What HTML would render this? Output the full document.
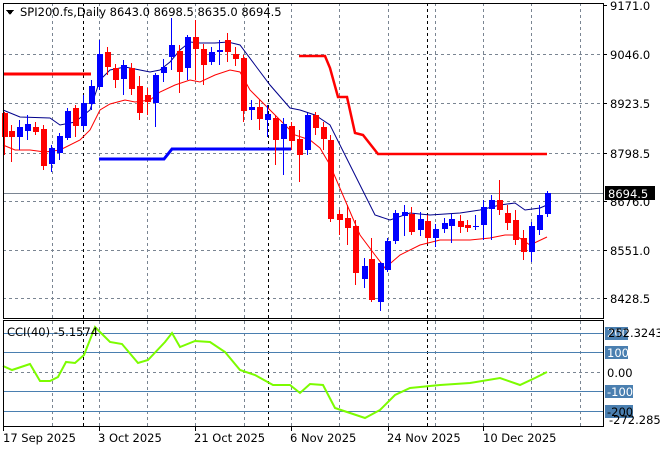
<!DOCTYPE html>
<html><head><meta charset="utf-8"><style>
body{margin:0;background:#fff;width:660px;height:450px;overflow:hidden;font-family:"DejaVu Sans","Liberation Sans",sans-serif}
svg{position:absolute;left:0;top:0}
text{font-family:"DejaVu Sans","Liberation Sans",sans-serif;font-size:11.5px;fill:#000}
</style></head><body>
<svg width="660" height="450" viewBox="0 0 660 450" shape-rendering="crispEdges">
<g stroke="#7a8592" stroke-dasharray="3,3" stroke-width="1">
<line x1="3" y1="54.5" x2="603" y2="54.5"/><line x1="3" y1="103.5" x2="603" y2="103.5"/><line x1="3" y1="153.5" x2="603" y2="153.5"/><line x1="3" y1="201.5" x2="603" y2="201.5"/><line x1="3" y1="250.5" x2="603" y2="250.5"/><line x1="3" y1="298.5" x2="603" y2="298.5"/>
<line x1="3" y1="372.5" x2="603" y2="372.5"/>
<line x1="52.5" y1="3" x2="52.5" y2="318"/><line x1="99.5" y1="3" x2="99.5" y2="318"/><line x1="147.5" y1="3" x2="147.5" y2="318"/><line x1="195.5" y1="3" x2="195.5" y2="318"/><line x1="244.5" y1="3" x2="244.5" y2="318"/><line x1="291.5" y1="3" x2="291.5" y2="318"/><line x1="339.5" y1="3" x2="339.5" y2="318"/><line x1="388.5" y1="3" x2="388.5" y2="318"/><line x1="435.5" y1="3" x2="435.5" y2="318"/><line x1="483.5" y1="3" x2="483.5" y2="318"/><line x1="531.5" y1="3" x2="531.5" y2="318"/><line x1="580.5" y1="3" x2="580.5" y2="318"/>
<line x1="52.5" y1="321" x2="52.5" y2="426"/><line x1="99.5" y1="321" x2="99.5" y2="426"/><line x1="147.5" y1="321" x2="147.5" y2="426"/><line x1="195.5" y1="321" x2="195.5" y2="426"/><line x1="244.5" y1="321" x2="244.5" y2="426"/><line x1="291.5" y1="321" x2="291.5" y2="426"/><line x1="339.5" y1="321" x2="339.5" y2="426"/><line x1="388.5" y1="321" x2="388.5" y2="426"/><line x1="435.5" y1="321" x2="435.5" y2="426"/><line x1="483.5" y1="321" x2="483.5" y2="426"/><line x1="531.5" y1="321" x2="531.5" y2="426"/><line x1="580.5" y1="321" x2="580.5" y2="426"/>
</g>
<g stroke="#000" stroke-dasharray="3,3"><line x1="83.5" y1="3" x2="83.5" y2="426"/><line x1="268.5" y1="3" x2="268.5" y2="426"/><line x1="427.5" y1="3" x2="427.5" y2="426"/></g>
<g stroke="#4a7fb0"><line x1="3" y1="333.5" x2="603" y2="333.5"/><line x1="3" y1="352.5" x2="603" y2="352.5"/><line x1="3" y1="391.5" x2="603" y2="391.5"/><line x1="3" y1="411.5" x2="603" y2="411.5"/></g>
<line x1="3" y1="193.5" x2="603" y2="193.5" stroke="#7a8592"/>
<g shape-rendering="auto" fill="none">
<polyline stroke="#f00" stroke-width="3" points="3,74 91,74"/>
<polyline stroke="#f00" stroke-width="2.5" points="299,56 325,56 330,68 338,97 347,97 355,133 363,135 378,154 547,154"/>
<polyline stroke="#00f" stroke-width="3" points="99,159 164,159 172,149 291,149"/>
<polyline stroke="#00008b" stroke-width="1" points="3,110 20,117 50,118 60,125 75,122 90,110 100,80 110,70 125,67 140,70 150,72 160,70 170,62 180,50 190,42 200,43 215,43 228,42 240,45 255,65 270,85 290,108 300,110 315,115 330,125 345,155 360,185 375,215 390,220 410,213 430,215 460,213 480,210 500,205 515,203 525,210 540,208 547,205"/>
<polyline stroke="#f00" stroke-width="1" points="3,145 15,150 30,150 45,152 60,150 80,140 90,130 100,110 110,104 125,100 135,102 150,100 160,92 175,85 190,80 200,82 215,75 230,70 240,72 250,90 265,105 280,120 295,135 310,140 320,148 330,165 345,200 360,235 375,255 385,268 400,255 420,245 440,240 470,240 490,238 505,235 515,235 530,245 547,237"/>
<polyline stroke="#7cfc00" stroke-width="2" points="3,366 12,370 30,364 40,381 50,381 58,377 66,362 75,363 84,355 95,327 103,335 110,342 122,344 138,363 148,360 165,342 172,333 180,347 195,341 210,342 225,352 240,370 255,375 273,385 290,385 300,393 310,384 323,385 335,408 350,413 365,418 380,410 395,395 410,388 440,385 470,383 500,378 520,385 535,378 547,372"/>
</g>
<g>
<g stroke="#f00">
<line x1="4.5" y1="112" x2="4.5" y2="155"/><line x1="11.5" y1="125" x2="11.5" y2="162"/><line x1="35.5" y1="122" x2="35.5" y2="135"/><line x1="43.5" y1="125" x2="43.5" y2="170"/><line x1="75.5" y1="105" x2="75.5" y2="137"/><line x1="107.5" y1="47" x2="107.5" y2="75"/><line x1="115.5" y1="64" x2="115.5" y2="88"/><line x1="131.5" y1="63" x2="131.5" y2="95"/><line x1="139.5" y1="76" x2="139.5" y2="120"/><line x1="147.5" y1="88" x2="147.5" y2="115"/><line x1="179.5" y1="45" x2="179.5" y2="93"/><line x1="195.5" y1="20" x2="195.5" y2="80"/><line x1="203.5" y1="44" x2="203.5" y2="85"/><line x1="227.5" y1="33" x2="227.5" y2="62"/><line x1="235.5" y1="47" x2="235.5" y2="66"/><line x1="243.5" y1="55" x2="243.5" y2="122"/><line x1="259.5" y1="100" x2="259.5" y2="130"/><line x1="275.5" y1="115" x2="275.5" y2="165"/><line x1="291.5" y1="122" x2="291.5" y2="150"/><line x1="299.5" y1="130" x2="299.5" y2="182"/><line x1="315.5" y1="112" x2="315.5" y2="135"/><line x1="323.5" y1="122" x2="323.5" y2="150"/><line x1="330.5" y1="135" x2="330.5" y2="222"/><line x1="339.5" y1="210" x2="339.5" y2="235"/><line x1="347.5" y1="205" x2="347.5" y2="245"/><line x1="355.5" y1="220" x2="355.5" y2="285"/><line x1="371.5" y1="238" x2="371.5" y2="302"/><line x1="411.5" y1="207" x2="411.5" y2="235"/><line x1="427.5" y1="215" x2="427.5" y2="243"/><line x1="460.5" y1="215" x2="460.5" y2="233"/><line x1="467.5" y1="220" x2="467.5" y2="232"/><line x1="499.5" y1="180" x2="499.5" y2="215"/><line x1="507.5" y1="205" x2="507.5" y2="230"/><line x1="515.5" y1="210" x2="515.5" y2="245"/><line x1="523.5" y1="230" x2="523.5" y2="260"/>
</g>
<g fill="#f00">
<rect x="2" y="113" width="6" height="24"/><rect x="9" y="131" width="6" height="6"/><rect x="33" y="127" width="6" height="5"/><rect x="41" y="129" width="6" height="37"/><rect x="73" y="108" width="6" height="18"/><rect x="105" y="52" width="6" height="15"/><rect x="113" y="68" width="6" height="12"/><rect x="129" y="68" width="6" height="21"/><rect x="137" y="86" width="6" height="27"/><rect x="145" y="95" width="6" height="7"/><rect x="177" y="51" width="6" height="21"/><rect x="193" y="37" width="6" height="12"/><rect x="201" y="49" width="6" height="16"/><rect x="225" y="40" width="6" height="12"/><rect x="233" y="54" width="6" height="5"/><rect x="241" y="58" width="6" height="53"/><rect x="257" y="107" width="6" height="12"/><rect x="273" y="118" width="6" height="22"/><rect x="289" y="126" width="6" height="15"/><rect x="297" y="139" width="6" height="16"/><rect x="313" y="115" width="6" height="13"/><rect x="321" y="127" width="6" height="12"/><rect x="328" y="140" width="6" height="79"/><rect x="337" y="214" width="6" height="6"/><rect x="345" y="218" width="6" height="10"/><rect x="353" y="226" width="6" height="47"/><rect x="369" y="259" width="6" height="41"/><rect x="409" y="214" width="6" height="18"/><rect x="425" y="221" width="6" height="17"/><rect x="458" y="221" width="6" height="6"/><rect x="465" y="225" width="6" height="3"/><rect x="497" y="200" width="6" height="10"/><rect x="505" y="213" width="6" height="10"/><rect x="513" y="220" width="6" height="20"/><rect x="521" y="238" width="6" height="14"/>
</g>
<g stroke="#00f">
<line x1="19.5" y1="120" x2="19.5" y2="150"/><line x1="27.5" y1="115" x2="27.5" y2="140"/><line x1="51.5" y1="145" x2="51.5" y2="172"/><line x1="59.5" y1="133" x2="59.5" y2="160"/><line x1="67.5" y1="108" x2="67.5" y2="140"/><line x1="83.5" y1="95" x2="83.5" y2="130"/><line x1="91.5" y1="80" x2="91.5" y2="110"/><line x1="99.5" y1="40" x2="99.5" y2="90"/><line x1="123.5" y1="60" x2="123.5" y2="95"/><line x1="155.5" y1="73" x2="155.5" y2="127"/><line x1="163.5" y1="59" x2="163.5" y2="82"/><line x1="171.5" y1="18" x2="171.5" y2="70"/><line x1="187.5" y1="35" x2="187.5" y2="80"/><line x1="211.5" y1="47" x2="211.5" y2="65"/><line x1="219.5" y1="40" x2="219.5" y2="65"/><line x1="251.5" y1="100" x2="251.5" y2="120"/><line x1="267.5" y1="105" x2="267.5" y2="137"/><line x1="283.5" y1="118" x2="283.5" y2="175"/><line x1="307.5" y1="113" x2="307.5" y2="155"/><line x1="364.5" y1="258" x2="364.5" y2="288"/><line x1="380.5" y1="262" x2="380.5" y2="311"/><line x1="387.5" y1="238" x2="387.5" y2="272"/><line x1="395.5" y1="210" x2="395.5" y2="244"/><line x1="404.5" y1="205" x2="404.5" y2="236"/><line x1="420.5" y1="212" x2="420.5" y2="236"/><line x1="435.5" y1="224" x2="435.5" y2="247"/><line x1="444.5" y1="218" x2="444.5" y2="233"/><line x1="451.5" y1="214" x2="451.5" y2="243"/><line x1="475.5" y1="215" x2="475.5" y2="230"/><line x1="483.5" y1="200" x2="483.5" y2="240"/><line x1="491.5" y1="195" x2="491.5" y2="240"/><line x1="531.5" y1="222" x2="531.5" y2="262"/><line x1="539.5" y1="205" x2="539.5" y2="235"/><line x1="547.5" y1="191" x2="547.5" y2="217"/>
</g>
<g fill="#00f">
<rect x="17" y="127" width="6" height="10"/><rect x="25" y="124" width="6" height="7"/><rect x="49" y="148" width="6" height="16"/><rect x="57" y="136" width="6" height="17"/><rect x="65" y="111" width="6" height="27"/><rect x="81" y="103" width="6" height="23"/><rect x="89" y="86" width="6" height="18"/><rect x="97" y="54" width="6" height="33"/><rect x="121" y="65" width="6" height="14"/><rect x="153" y="75" width="6" height="28"/><rect x="161" y="67" width="6" height="6"/><rect x="169" y="45" width="6" height="12"/><rect x="185" y="37" width="6" height="31"/><rect x="209" y="52" width="6" height="10"/><rect x="217" y="50" width="6" height="2"/><rect x="249" y="107" width="6" height="3"/><rect x="265" y="114" width="6" height="6"/><rect x="281" y="124" width="6" height="15"/><rect x="305" y="115" width="6" height="35"/><rect x="362" y="266" width="6" height="13"/><rect x="378" y="263" width="6" height="39"/><rect x="385" y="241" width="6" height="29"/><rect x="393" y="213" width="6" height="28"/><rect x="402" y="212" width="6" height="4"/><rect x="418" y="219" width="6" height="11"/><rect x="433" y="229" width="6" height="9"/><rect x="442" y="223" width="6" height="6"/><rect x="449" y="219" width="6" height="7"/><rect x="473" y="226" width="6" height="1"/><rect x="481" y="207" width="6" height="18"/><rect x="489" y="200" width="6" height="9"/><rect x="529" y="226" width="6" height="26"/><rect x="537" y="215" width="6" height="15"/><rect x="545" y="193" width="6" height="21"/>
</g>
</g>
<g fill="none" stroke="#000"><rect x="3.5" y="3.5" width="600" height="315"/><rect x="3.5" y="320.5" width="600" height="106"/></g>
<g stroke="#000"><line x1="603" y1="5.5" x2="607" y2="5.5"/><line x1="603" y1="54.5" x2="607" y2="54.5"/><line x1="603" y1="103.5" x2="607" y2="103.5"/><line x1="603" y1="153.5" x2="607" y2="153.5"/><line x1="603" y1="201.5" x2="607" y2="201.5"/><line x1="603" y1="250.5" x2="607" y2="250.5"/><line x1="603" y1="298.5" x2="607" y2="298.5"/></g>
<polygon points="6,10 14,10 10,15" fill="#000"/>
<text x="20" y="16">SPI200.fs,Daily  8643.0 8698.5 8635.0 8694.5</text>
<text x="7" y="336">CCI(40) -5.1574</text>
<text x="610" y="10">9171.0</text><text x="610" y="59">9046.0</text><text x="610" y="108">8923.5</text><text x="610" y="158">8798.5</text><text x="610" y="206">8676.0</text><text x="610" y="255">8551.0</text><text x="610" y="303">8428.5</text>
<rect x="605" y="186" width="50" height="14" fill="#000"/><text x="608" y="198" style="fill:#fff">8694.5</text>
<rect x="605" y="327" width="23" height="13" fill="#4a7fb0"/><text x="607" y="337" style="fill:#fff">200</text><text x="608" y="337">252.3243</text>
<rect x="605" y="346" width="23" height="13" fill="#4a7fb0"/><text x="607" y="357" style="fill:#fff">100</text>
<text x="607" y="377">0.00</text>
<rect x="605" y="385" width="28" height="13" fill="#4a7fb0"/><text x="607" y="396" style="fill:#fff">-100</text>
<rect x="605" y="405" width="28" height="13" fill="#4a7fb0"/><text x="607" y="416">-200</text>
<text x="609" y="424">-272.2857</text>
<g stroke="#000"><line x1="3.5" y1="427" x2="3.5" y2="431"/><line x1="99.5" y1="427" x2="99.5" y2="431"/><line x1="195.5" y1="427" x2="195.5" y2="431"/><line x1="291.5" y1="427" x2="291.5" y2="431"/><line x1="388.5" y1="427" x2="388.5" y2="431"/><line x1="483.5" y1="427" x2="483.5" y2="431"/></g>
<text x="3" y="442">17 Sep 2025</text><text x="98" y="442">3 Oct 2025</text><text x="194" y="442">21 Oct 2025</text><text x="290" y="442">6 Nov 2025</text><text x="387" y="442">24 Nov 2025</text><text x="483" y="442">10 Dec 2025</text>
</svg>
</body></html>
